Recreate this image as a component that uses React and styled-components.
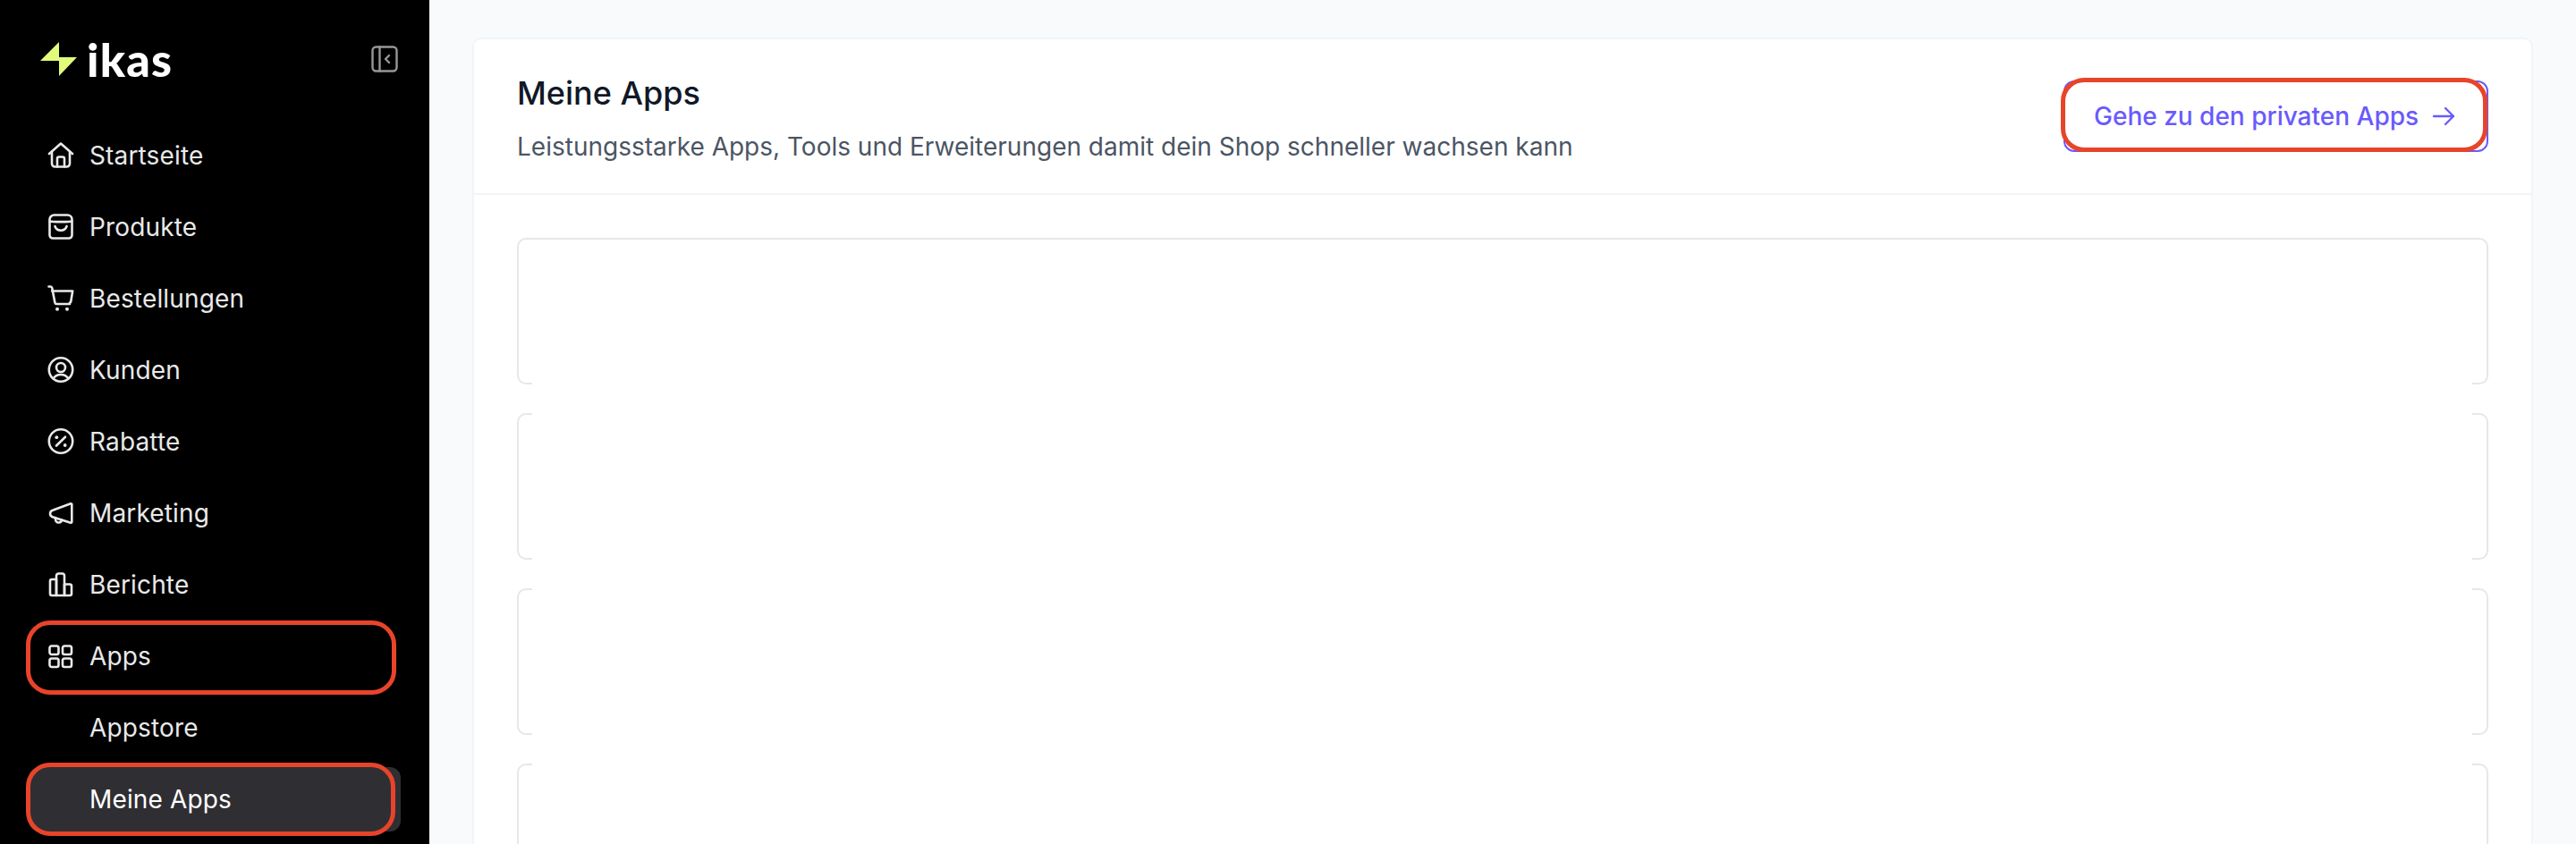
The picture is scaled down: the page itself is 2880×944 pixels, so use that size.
import React from "react";
import styled, { createGlobalStyle } from "styled-components";

const Global = createGlobalStyle`
  html, body { margin: 0; padding: 0; height: 100%; background: #f9fafb; }
  body { font-family: Inter, "Liberation Sans", sans-serif; overflow: hidden; }
  * { box-sizing: border-box; }
`;

const Page = styled.div`
  display: flex;
  width: 2880px;
  height: 944px;
  overflow: hidden;
  background: #f9fafb;
`;

const Sidebar = styled.aside`
  flex: 0 0 480px;
  height: 944px;
  background: #000;
  padding: 47px 32px 0;
  display: flex;
  flex-direction: column;
`;

const Brand = styled.div`
  display: flex;
  align-items: center;
  justify-content: space-between;
  height: 38px;
  margin: 0 3px 53px 13px;
`;

const Logo = styled.div`
  display: flex;
  align-items: center;
  gap: 10px;
`;

const Wordmark = styled.span`
  font-family: Lato, sans-serif;
  font-weight: 900;
  font-size: 52px;
  line-height: 38px;
  letter-spacing: 1.2px;
  color: #fff;
`;

const CollapseButton = styled.span`
  display: flex;
  color: #979797;
`;

const Nav = styled.nav`
  display: flex;
  flex-direction: column;
  gap: 8px;
`;

const Row = styled.div`
  position: relative;
  display: flex;
  align-items: center;
  gap: 17px;
  height: 72px;
  padding-left: ${p => (p.$sub ? "68px" : "21px")};
  border-radius: 12px;
  font-size: 28px;
  font-weight: 400;
  letter-spacing: 0.15px;
  color: ${p => (p.$active ? "#fff" : "#e9e9ea")};
  background: ${p => (p.$active ? "#2f2e33" : "transparent")};
`;

const Callout = styled.span`
  position: absolute;
  left: -3px;
  right: ${p => (p.$active ? "6px" : "5px")};
  top: ${p => (p.$active ? "-5px" : "-4px")};
  bottom: ${p => (p.$active ? "-5px" : "-7px")};
  border: 5px solid #e8442a;
  border-radius: 27px;
`;

const Main = styled.main`
  flex: 1;
  padding: 42px 48px 0;
  min-width: 0;
`;

const Card = styled.section`
  background: #fff;
  border: 2px solid #f3f4f6;
  border-radius: 10px;
  height: 1200px;
`;

const CardHeader = styled.header`
  display: flex;
  align-items: center;
  justify-content: space-between;
  height: 174px;
  padding: 0 48px;
  border-bottom: 2px solid #f3f4f6;
`;

const HeaderText = styled.div`
  display: flex;
  flex-direction: column;
  gap: 12px;
`;

const Title = styled.h1`
  margin: 0;
  font-size: 36px;
  line-height: 56px;
  font-weight: 500;
  color: #111827;
`;

const Subtitle = styled.p`
  margin: 0;
  font-size: 28px;
  line-height: 40px;
  font-weight: 400;
  color: #4b5563;
`;

const PrivateButton = styled.button`
  position: relative;
  display: flex;
  align-items: center;
  gap: 14px;
  width: 475px;
  height: 80px;
  padding: 0 0 0 32px;
  background: #fff;
  border: 2px solid #6a5afd;
  border-radius: 12px;
  font-family: inherit;
  font-size: 28px;
  font-weight: 500;
  color: #6a5afd;
`;

const ButtonCallout = styled.span`
  position: absolute;
  left: -5px;
  right: -1px;
  top: -5px;
  bottom: -2px;
  border: 5px solid #e8442a;
  border-radius: 26px;
`;

const List = styled.div`
  position: relative;
  display: flex;
  flex-direction: column;
  gap: 32px;
  padding: 48px 48px 0;
`;

const AppCard = styled.div`
  height: 164px;
  flex: none;
  border: 2px solid #e5e7eb;
  border-radius: 10px;
`;

const Mask = styled.div`
  position: absolute;
  left: 65px;
  right: 66px;
  top: 52px;
  bottom: 0;
  background: #fff;
`;

const Icon = ({ children }) => (
  <svg width="30" height="30" viewBox="0 0 30 30" fill="none" stroke="currentColor"
    strokeWidth="2.6" strokeLinecap="round" strokeLinejoin="round" style={{ flex: "none" }}>
    {children}
  </svg>
);

const icons = {
  home: <><path d="M2 13 15 1.500 28 13" /><path d="M5 11v13a3.500 3.500 0 0 0 3.500 3.500h13A3.500 3.500 0 0 0 25 24V11" /><path d="M11 27.500V18.500a2 2 0 0 1 2-2h4a2 2 0 0 1 2 2v9" /></>,
  bag: <><path d="M7.500 1.500h15a5 5 0 0 1 5 5V24a3.500 3.500 0 0 1-3.500 3.500H6A3.500 3.500 0 0 1 2.500 24V6.500a5 5 0 0 1 5-5Z" /><path d="M2.800 8.500C5 9.300 25 9.300 27.200 8.500" /><path d="M8.500 14c.8 3 3.300 4.700 6.500 4.700s5.700-1.700 6.500-4.700" /></>,
  cart: <><path d="M1.500 1.500h1.800c.9 0 1.700.6 1.900 1.500L8.400 19.500c.2 1 1 1.500 2 1.500H25" /><path d="M5.200 6.500H28.200l-2 12c-.1.600-.6 1-1.200 1" /><circle cx="11" cy="26.700" r="2" fill="currentColor" stroke="none" /><circle cx="22" cy="26.700" r="2" fill="currentColor" stroke="none" /></>,
  user: <><circle cx="15" cy="14.500" r="13.200" /><circle cx="15" cy="12" r="5" /><path d="M6.500 24.500c1.800-3 4.800-4.500 8.500-4.500s6.700 1.500 8.500 4.500" /></>,
  percent: <><circle cx="15" cy="14.500" r="13.200" /><path d="m20 9.700-10 9.800" /><circle cx="10.300" cy="10.200" r="1.900" fill="currentColor" stroke="none" /><circle cx="19.700" cy="19" r="1.900" fill="currentColor" stroke="none" /></>,
  megaphone: <><path d="M27.300 5.200v19.600c0 .7-.5 1.100-1.200.9L6.500 19.500C4.300 18.800 3 17.500 3 15.500s1.300-3.300 3.500-4l19.600-7.200c.7-.2 1.200.2 1.200.9Z" /><path d="M9 20v1.500c0 2.300 1.500 4 3.500 4s3.300-1.200 3.600-3" /></>,
  chart: <><path d="M3 11a2 2 0 0 1 2-2h5v18H5a2 2 0 0 1-2-2Z" /><path d="M10 5a2.500 2.500 0 0 1 2.500-2.500h4A2.500 2.500 0 0 1 19 5v22h-9Z" /><path d="M19 14.500h6a2 2 0 0 1 2 2V25a2 2 0 0 1-2 2h-6Z" /></>,
  grid: <><rect x="2.500" y="3.500" width="10" height="9.500" rx="2.200" /><rect x="17" y="3.500" width="10" height="9.500" rx="2.200" /><rect x="2.500" y="17.500" width="10" height="9.500" rx="2.200" /><rect x="17" y="17.500" width="10" height="9.500" rx="2.200" /></>,
};

const items = [
  ["home", "Startseite"],
  ["bag", "Produkte"],
  ["cart", "Bestellungen"],
  ["user", "Kunden"],
  ["percent", "Rabatte"],
  ["megaphone", "Marketing"],
  ["chart", "Berichte"],
];

export default function App() {
  return (
    <Page>
      <Global />
      <Sidebar>
        <Brand>
          <Logo>
            <svg width="42" height="38" viewBox="0 0 42 38">
              <path fill="#e1fb7b" d="M21 0v17h20L21 38V21H0Z" />
            </svg>
            <Wordmark>ikas</Wordmark>
          </Logo>
          <CollapseButton>
            <svg width="30" height="30" viewBox="0 0 30 30" fill="none" stroke="currentColor" strokeWidth="2.400" strokeLinecap="round" strokeLinejoin="round">
              <rect x="1.500" y="1.500" width="27" height="27" rx="4" />
              <path d="M9.500 1.500v27" />
              <path d="m20 11-4 4 4 4" />
            </svg>
          </CollapseButton>
        </Brand>
        <Nav>
          {items.map(([icon, label]) => (
            <Row key={label}><Icon>{icons[icon]}</Icon>{label}</Row>
          ))}
          <Row><Icon>{icons.grid}</Icon>Apps<Callout /></Row>
          <Row $sub>Appstore</Row>
          <Row $sub $active>Meine Apps<Callout $active /></Row>
        </Nav>
      </Sidebar>
      <Main>
        <Card>
          <CardHeader>
            <HeaderText>
              <Title>Meine Apps</Title>
              <Subtitle>Leistungsstarke Apps, Tools und Erweiterungen damit dein Shop schneller wachsen kann</Subtitle>
            </HeaderText>
            <PrivateButton>
              Gehe zu den privaten Apps
              <svg width="28" height="28" viewBox="0 0 28 28" fill="none" stroke="currentColor" strokeWidth="2.400" strokeLinecap="round" strokeLinejoin="round">
                <path d="M3 14h22M16 5l9 9-9 9" />
              </svg>
              <ButtonCallout />
            </PrivateButton>
          </CardHeader>
          <List>
            <AppCard /><AppCard /><AppCard /><AppCard />
            <Mask />
          </List>
        </Card>
      </Main>
    </Page>
  );
}
